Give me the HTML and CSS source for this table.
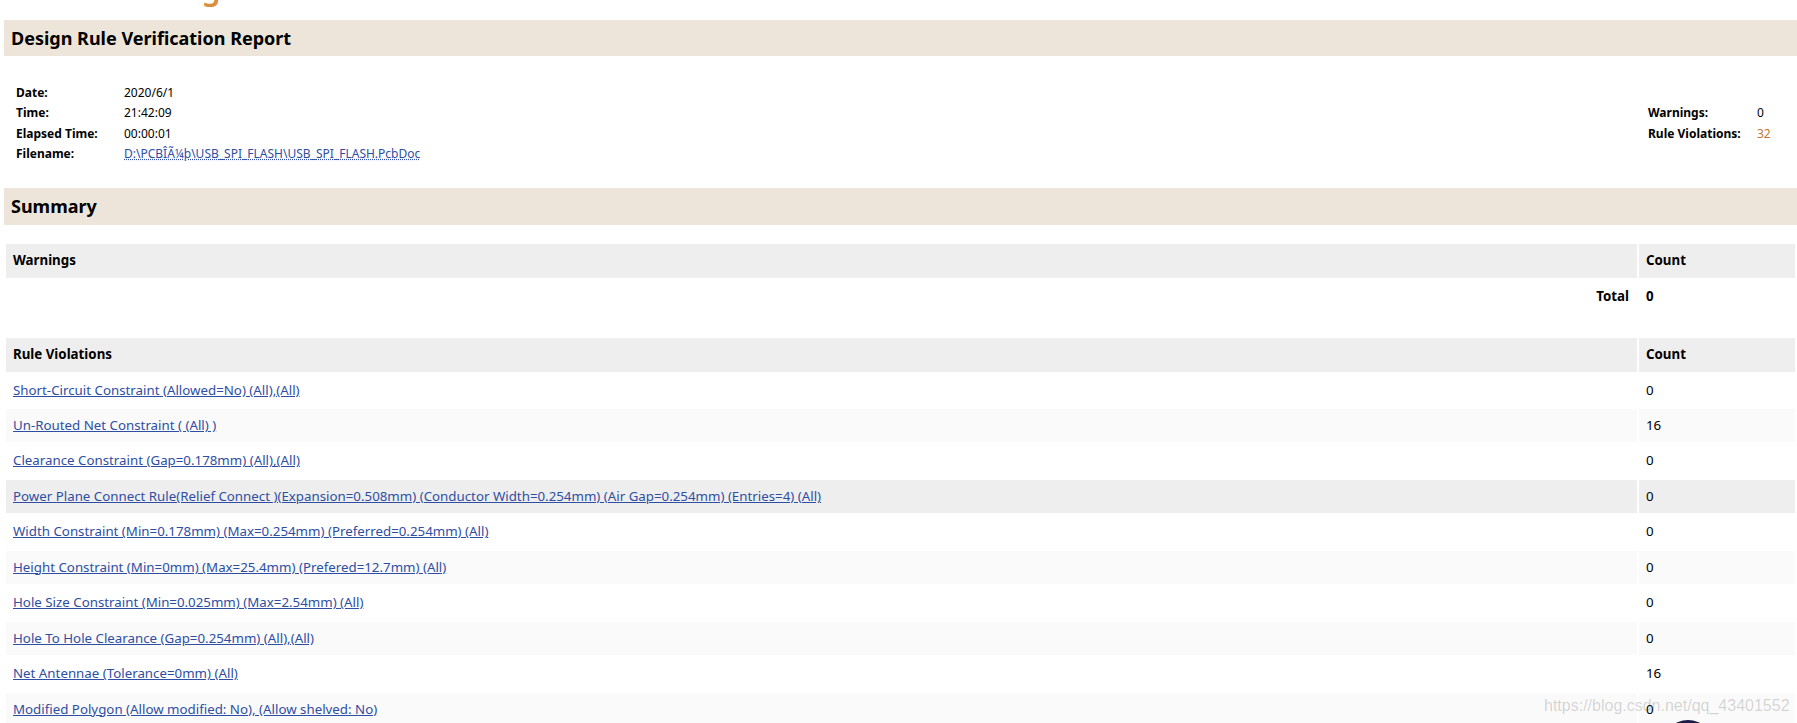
FILE: index.html
```html
<!DOCTYPE html>
<html lang="en">
<head>
<meta charset="utf-8">
<title>Design Rule Verification Report</title>
<link rel="stylesheet" href="styles.css">
</head>
<body>
<div class="brand-strip"><span class="brand">Altium Designer</span></div>

<h1 class="band">Design Rule Verification Report</h1>

<div class="info">
  <table class="meta">
    <tr><td class="lbl">Date:</td><td>2020/6/1</td></tr>
    <tr><td class="lbl">Time:</td><td>21:42:09</td></tr>
    <tr><td class="lbl">Elapsed Time:</td><td>00:00:01</td></tr>
    <tr><td class="lbl">Filename:</td><td><a class="file" href="#">D:\PCBÎÃ¼þ\USB_SPI_FLASH\USB_SPI_FLASH.PcbDoc</a></td></tr>
  </table>
  <table class="meta meta-right">
    <tr><td class="lbl">Warnings:</td><td>0</td></tr>
    <tr><td class="lbl">Rule Violations:</td><td class="hot">32</td></tr>
  </table>
</div>

<h2 class="band band-sub">Summary</h2>

<table class="grid grid-first">
  <tr class="head"><th>Warnings</th><th class="count">Count</th></tr>
  <tr class="total"><td class="right">Total</td><td class="count">0</td></tr>
</table>

<table class="grid grid-second">
  <tr class="head"><th>Rule Violations</th><th class="count">Count</th></tr>
  <tr><td><a href="#">Short-Circuit Constraint (Allowed=No) (All),(All)</a></td><td class="count">0</td></tr>
  <tr class="alt"><td><a href="#">Un-Routed Net Constraint ( (All) )</a></td><td class="count">16</td></tr>
  <tr><td><a href="#">Clearance Constraint (Gap=0.178mm) (All),(All)</a></td><td class="count">0</td></tr>
  <tr class="hover"><td><a href="#">Power Plane Connect Rule(Relief Connect )(Expansion=0.508mm) (Conductor Width=0.254mm) (Air Gap=0.254mm) (Entries=4) (All)</a></td><td class="count">0</td></tr>
  <tr><td><a href="#">Width Constraint (Min=0.178mm) (Max=0.254mm) (Preferred=0.254mm) (All)</a></td><td class="count">0</td></tr>
  <tr class="alt"><td><a href="#">Height Constraint (Min=0mm) (Max=25.4mm) (Prefered=12.7mm) (All)</a></td><td class="count">0</td></tr>
  <tr><td><a href="#">Hole Size Constraint (Min=0.025mm) (Max=2.54mm) (All)</a></td><td class="count">0</td></tr>
  <tr class="alt"><td><a href="#">Hole To Hole Clearance (Gap=0.254mm) (All),(All)</a></td><td class="count">0</td></tr>
  <tr><td><a href="#">Net Antennae (Tolerance=0mm) (All)</a></td><td class="count">16</td></tr>
  <tr class="alt"><td><a href="#">Modified Polygon (Allow modified: No), (Allow shelved: No)</a></td><td class="count">0</td></tr>
</table>

<div class="watermark">https://blog.csdn.net/qq_43401552</div>
<div class="fab"></div>
</body>
</html>
```

FILE: styles.css
```css
html, body {
  margin: 0;
  padding: 0;
  background: #ffffff;
  overflow: hidden;
}

body {
  font-family: "Noto Sans", "Open Sans", sans-serif;
  font-size: 12px;
  color: #000000;
  padding-left: 4px;
  position: relative;
  height: 723px;
}

.brand-strip {
  height: 20px;
  overflow: hidden;
  padding-left: 30px;
}

.brand {
  display: block;
  font-size: 30px;
  line-height: 30px;
  font-weight: 600;
  color: #d8903f;
  margin-top: -26px;
  white-space: nowrap;
}

.band {
  margin: 0;
  background: #ede5d9;
  font-size: 18px;
  font-weight: bold;
  padding-left: 7px;
  height: 36px;
  line-height: 36px;
}

.band-sub {
  height: 37px;
  line-height: 37px;
}

.info {
  display: flex;
  align-items: center;
  justify-content: space-between;
  padding: 27px 10px 24px 12px;
}

.meta {
  border-collapse: collapse;
}

.meta td {
  padding: 0;
  height: 20.3px;
  line-height: 20.3px;
  white-space: nowrap;
}

.meta .lbl {
  font-weight: bold;
  width: 108px;
}

.meta-right .lbl {
  width: 109px;
}

.meta-right td:last-child {
  width: 30px;
}

.hot {
  color: #c0763a;
}

a {
  color: #2e4ea3;
  text-decoration: underline;
}

a.file {
  text-decoration: underline dotted;
}

.grid {
  width: 100%;
  border-spacing: 2px;
  font-size: 13.3px;
}

.grid-first {
  margin-top: 17px;
}

.grid-second {
  margin-top: 21px;
}

.grid th,
.grid td {
  padding: 8px 7px;
  line-height: 17.46px;
  text-align: left;
  white-space: nowrap;
}

.grid th {
  font-weight: bold;
}

.grid .count {
  width: 142px;
}

.head th {
  background: #eeeeee;
}

.total td {
  font-weight: bold;
}

.total .right {
  text-align: right;
  padding-right: 8px;
}

.alt td {
  background: #fafafa;
}

.hover td {
  background: #eeeeee;
}

.watermark {
  position: absolute;
  left: 1544px;
  top: 697px;
  font-family: "Liberation Sans", Arial, sans-serif;
  font-size: 16px;
  color: rgba(0, 0, 0, 0.17);
  white-space: nowrap;
}

.fab {
  position: absolute;
  left: 1662px;
  top: 720px;
  width: 52px;
  height: 52px;
  border-radius: 50%;
  background: #1d1a48;
}
```
